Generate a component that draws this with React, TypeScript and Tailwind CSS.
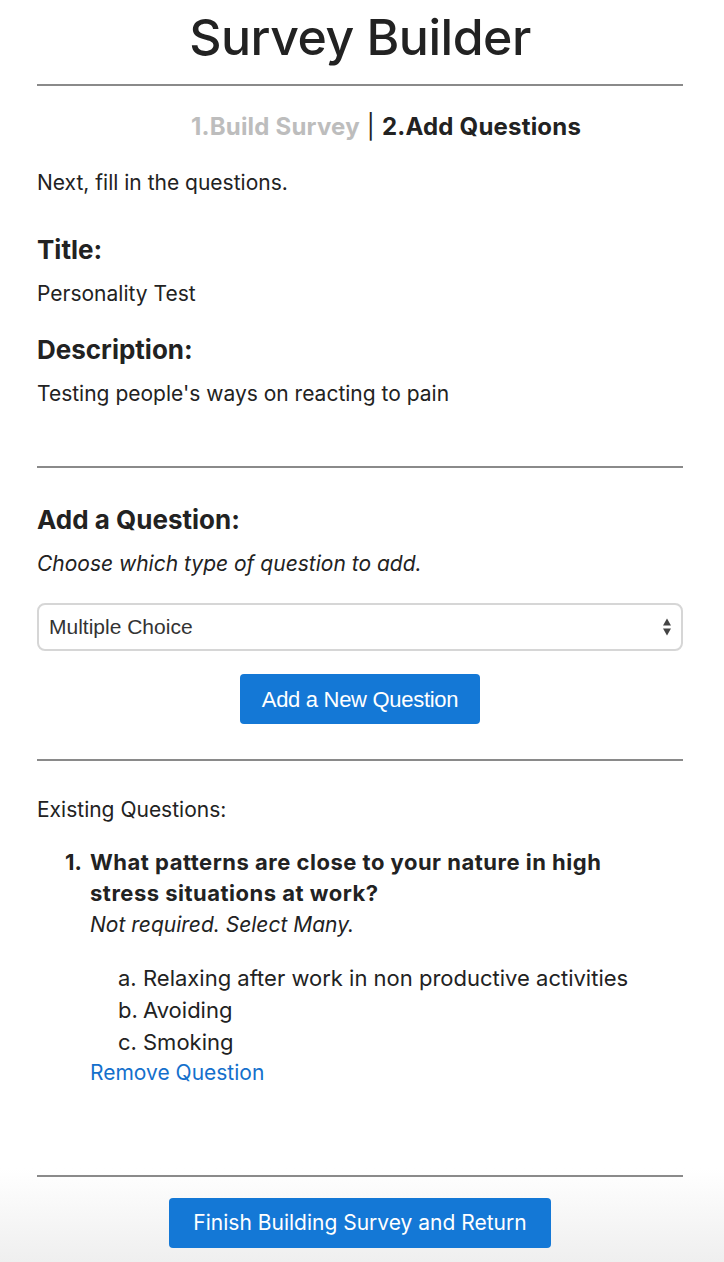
import React, { useState } from 'react';

type Question = {
  text: string;
  note: string;
  options: string[];
};

const questions: Question[] = [
  {
    text: 'What patterns are close to your nature in high stress situations at work?',
    note: 'Not required. Select Many.',
    options: ['Relaxing after work in non productive activities', 'Avoiding', 'Smoking'],
  },
];

function Rule() {
  return <hr className="border-0 h-[2px] bg-[#8a8a8a]" />;
}

export default function App() {
  const [type, setType] = useState('Multiple Choice');

  return (
    <div className="min-h-[1262px] bg-white text-[#222] font-['Inter','Noto_Sans',sans-serif] flex flex-col">
      <div className="pl-[37px] pr-[41px] flex-1">
        <h1 className="text-center text-[50px] font-medium leading-none pt-[12px] pb-[22px] tracking-[-0.5px]">Survey Builder</h1>
        <Rule />

        <p className="text-center text-[24px] font-bold mt-[26px] leading-[30px] pl-[52px] tracking-[0.2px]">
          <span className="text-[#bdbdbd]">1.Build Survey</span>
          <span className="font-normal"> | </span>
          <span>2.Add Questions</span>
        </p>

        <p className="text-[21px] mt-[26px] leading-[30px]">Next, fill in the questions.</p>

        <h3 className="text-[26px] font-bold mt-[35px] leading-[34px]">Title:</h3>
        <p className="text-[21px] mt-[12px] leading-[30px]">Personality Test</p>

        <h3 className="text-[26px] font-bold mt-[24px] leading-[34px]">Description:</h3>
        <p className="text-[21px] mt-[12px] leading-[30px]">Testing people's ways on reacting to pain</p>

        <div className="mt-[57px]">
          <Rule />
        </div>

        <h3 className="text-[26px] font-bold mt-[35px] leading-[34px]">Add a Question:</h3>
        <p className="text-[21px] italic mt-[12px] leading-[30px]">Choose which type of question to add.</p>

        <div className="relative mt-[24px]">
          <select
            value={type}
            onChange={(e) => setType(e.target.value)}
            className="appearance-none w-full h-[48px] rounded-[8px] border-2 border-[#d6d6d6] bg-white pl-[10px] text-[21px] text-[#333] font-['Liberation_Sans',sans-serif] outline-none"
          >
            <option>Multiple Choice</option>
            <option>Short Answer</option>
            <option>True / False</option>
          </select>
          <div className="absolute right-[12px] top-1/2 -translate-y-1/2 flex flex-col items-center gap-[3px] pointer-events-none">
            <div className="w-0 h-0 border-l-[4px] border-r-[4px] border-b-[7px] border-l-transparent border-r-transparent border-b-[#444]" />
            <div className="w-0 h-0 border-l-[4px] border-r-[4px] border-t-[7px] border-l-transparent border-r-transparent border-t-[#444]" />
          </div>
        </div>

        <div className="flex justify-center mt-[23px]">
          <button className="w-[240px] h-[50px] rounded-[4px] bg-[#1478d6] text-white text-[22px] font-['Liberation_Sans',sans-serif] tracking-[-0.3px]">
            Add a New Question
          </button>
        </div>

        <div className="mt-[35px]">
          <Rule />
        </div>

        <p className="text-[21px] mt-[34px] leading-[30px]">Existing Questions:</p>

        <ol className="mt-[22px] pl-[28px]">
          {questions.map((q, i) => (
            <li key={i} className="flex">
              <span className="w-[25px] shrink-0 text-[22px] font-bold leading-[31px]">{i + 1}.</span>
              <div>
                <p className="max-w-[540px] text-[22px] font-bold leading-[31px] tracking-[0.5px]">{q.text}</p>
                <p className="text-[21px] italic leading-[31px]">{q.note}</p>
                <ul className="mt-[22px] pl-[28px]">
                  {q.options.map((o, j) => (
                    <li key={j} className="flex text-[22px] leading-[32px]">
                      <span className="w-[25px] shrink-0">{String.fromCharCode(97 + j)}.</span>
                      <span>{o}</span>
                    </li>
                  ))}
                </ul>
                <a href="#" className="block text-[21px] text-[#1470cc] leading-[30px]">Remove Question</a>
              </div>
            </li>
          ))}
        </ol>
      </div>

      <div className="pl-[37px] pr-[41px] bg-gradient-to-b from-white from-20% to-[#efefef] pt-[30px] pb-[14px]">
        <Rule />
        <div className="flex justify-center mt-[21px]">
          <button className="w-[382px] h-[50px] rounded-[4px] bg-[#1478d6] text-white text-[21px]">
            Finish Building Survey and Return
          </button>
        </div>
      </div>
    </div>
  );
}
